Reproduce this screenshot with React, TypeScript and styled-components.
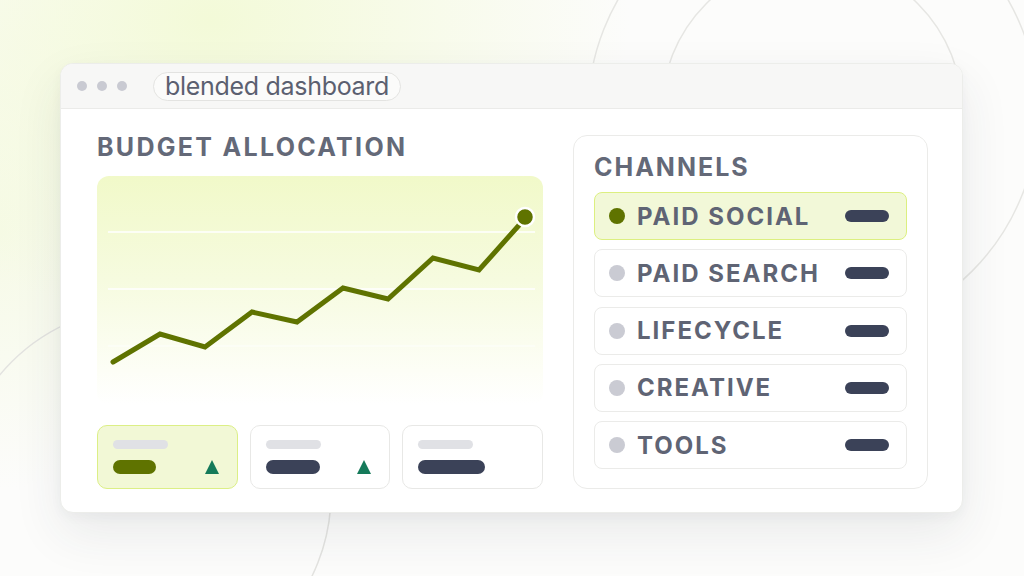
import styled, { createGlobalStyle } from "styled-components";

const GlobalStyle = createGlobalStyle`
  html, body {
    margin: 0;
    padding: 0;
  }
  body {
    font-family: Inter, "Noto Sans", "Liberation Sans", sans-serif;
    background: #fcfcfb;
  }
`;

interface Channel {
  name: string;
  active?: boolean;
}

const channels: Channel[] = [
  { name: "PAID SOCIAL", active: true },
  { name: "PAID SEARCH" },
  { name: "LIFECYCLE" },
  { name: "CREATIVE" },
  { name: "TOOLS" },
];

interface Metric {
  bar: number;
  active?: boolean;
  up?: boolean;
}

const metrics: Metric[] = [
  { bar: 43, active: true, up: true },
  { bar: 54, up: true },
  { bar: 67 },
];

const points = [
  [16, 186],
  [63, 158],
  [108, 171],
  [155, 136],
  [200, 146],
  [246, 112],
  [291, 123],
  [336, 82],
  [382, 94],
  [424, 47],
];

const App = () => {
  return (
    <Page>
      <GlobalStyle />
      <Backdrop viewBox="0 0 1024 576">
        <circle cx="812" cy="110" r="150" fill="none" stroke="#e6e6e3" strokeWidth="1.5" />
        <circle cx="813" cy="112" r="225" fill="none" stroke="#e6e6e3" strokeWidth="1.5" />
        <circle cx="144" cy="494" r="187" fill="none" stroke="#e3e3e0" strokeWidth="1.5" />
      </Backdrop>
      <Window>
        <TitleBar>
          <Dots>
            <Dot />
            <Dot />
            <Dot />
          </Dots>
          <AddressPill>blended dashboard</AddressPill>
        </TitleBar>
        <Body>
          <LeftColumn>
            <Heading>BUDGET ALLOCATION</Heading>
            <Chart>
              <svg width="446" height="229" viewBox="0 0 446 229">
                <line x1="11" y1="56" x2="438" y2="56" stroke="#ffffff" strokeWidth="1.5" />
                <line x1="11" y1="113" x2="438" y2="113" stroke="#ffffff" strokeWidth="1.5" />
                <line x1="11" y1="170" x2="438" y2="170" stroke="#ffffff" strokeOpacity="0.5" strokeWidth="1.5" />
                <polyline
                  points={points.map((p) => p.join(",")).join(" ")}
                  fill="none"
                  stroke="#5f7300"
                  strokeWidth="5"
                  strokeLinecap="round"
                  strokeLinejoin="miter"
                />
                <circle cx="428" cy="41" r="9" fill="#5f7300" stroke="#ffffff" strokeWidth="2.5" />
              </svg>
            </Chart>
            <MetricRow>
              {metrics.map((m, i) => (
                <MetricCard key={i} $active={m.active}>
                  <MetricLabel />
                  <MetricLine>
                    <MetricValue $active={m.active} style={{ width: m.bar }} />
                    {m.up && <UpArrow />}
                  </MetricLine>
                </MetricCard>
              ))}
            </MetricRow>
          </LeftColumn>
          <ChannelPanel>
            <PanelTitle>CHANNELS</PanelTitle>
            <ChannelList>
              {channels.map((c) => (
                <ChannelRow key={c.name} $active={c.active}>
                  <ChannelDot $active={c.active} />
                  <ChannelName>{c.name}</ChannelName>
                  <ChannelBar />
                </ChannelRow>
              ))}
            </ChannelList>
          </ChannelPanel>
        </Body>
      </Window>
    </Page>
  );
};

const Page = styled.div`
  position: relative;
  width: 1024px;
  height: 576px;
  overflow: hidden;
  box-sizing: border-box;
  padding: 63px 0 0 60px;
  background: radial-gradient(ellipse 420px 300px at 210px 20px, #f3fad8 0%, rgba(243, 250, 216, 0.55) 45%, rgba(252, 252, 251, 0) 100%),
    radial-gradient(ellipse 200px 260px at 0px 230px, #f6fae6 0%, rgba(252, 252, 251, 0) 100%),
    #fcfcfb;
`;

const Backdrop = styled.svg`
  position: absolute;
  left: 0;
  top: 0;
  width: 1024px;
  height: 576px;
  pointer-events: none;
`;

const Window = styled.div`
  position: relative;
  width: 903px;
  height: 450px;
  box-sizing: border-box;
  display: flex;
  flex-direction: column;
  border: 1px solid #ecedea;
  border-radius: 13px;
  background: #ffffff;
  overflow: hidden;
  box-shadow: 0 20px 50px rgba(40, 50, 70, 0.09), 0 4px 12px rgba(40, 50, 70, 0.04);
`;

const TitleBar = styled.div`
  height: 44px;
  flex-shrink: 0;
  display: flex;
  align-items: center;
  padding-left: 16px;
  background: #f7f7f6;
  border-bottom: 1px solid #ebebe9;
`;

const Dots = styled.div`
  display: flex;
  gap: 10px;
  margin-right: 26px;
`;

const Dot = styled.span`
  width: 10px;
  height: 10px;
  border-radius: 50%;
  background: #c9cad2;
`;

const AddressPill = styled.div`
  height: 29px;
  box-sizing: border-box;
  display: flex;
  align-items: center;
  padding: 0 11px;
  border: 1px solid #e3e3e1;
  border-radius: 15px;
  background: #fbfbfa;
  color: #5b6070;
  font-size: 25px;
  font-weight: 400;
  letter-spacing: -0.3px;
`;

const Body = styled.div`
  flex: 1;
  display: flex;
  gap: 30px;
  padding: 26px 34px 23px 36px;
`;

const LeftColumn = styled.div`
  width: 446px;
  display: flex;
  flex-direction: column;
`;

const Heading = styled.h2`
  margin: -2px 0 15px;
  height: 28px;
  line-height: 28px;
  font-size: 25px;
  font-weight: 700;
  letter-spacing: 2.3px;
  color: #646978;
`;

const Chart = styled.div`
  height: 229px;
  border-radius: 12px;
  overflow: hidden;
  background: linear-gradient(180deg, #f1f9c9 0%, #f6fbdf 45%, #fdfef6 85%, #ffffff 100%);

  svg {
    display: block;
  }
`;

const MetricRow = styled.div`
  margin-top: 20px;
  display: grid;
  grid-template-columns: repeat(3, 1fr);
  gap: 12px;
`;

const MetricCard = styled.div<{ $active?: boolean }>`
  height: 64px;
  box-sizing: border-box;
  display: flex;
  flex-direction: column;
  justify-content: center;
  gap: 11px;
  padding: 0 18px 0 15px;
  border-radius: 10px;
  border: 1.5px solid ${({ $active }) => ($active ? "#dcef86" : "#e8e8e6")};
  background: ${({ $active }) => ($active ? "#f2f8d6" : "#ffffff")};
`;

const MetricLabel = styled.div`
  width: 55px;
  height: 9px;
  border-radius: 5px;
  background: #e0e1e5;
`;

const MetricLine = styled.div`
  display: flex;
  align-items: center;
  justify-content: space-between;
`;

const MetricValue = styled.div<{ $active?: boolean }>`
  height: 14px;
  border-radius: 7px;
  background: ${({ $active }) => ($active ? "#5f7300" : "#3b4258")};
`;

const UpArrow = styled.div`
  width: 0;
  height: 0;
  border-left: 7.5px solid transparent;
  border-right: 7.5px solid transparent;
  border-bottom: 14px solid #157a5a;
`;

const ChannelPanel = styled.div`
  width: 355px;
  box-sizing: border-box;
  padding: 19px 20px 19px 20px;
  border: 1.5px solid #ebebe9;
  border-radius: 14px;
  display: flex;
  flex-direction: column;
`;

const PanelTitle = styled.h3`
  margin: -2px 0 11px;
  height: 28px;
  line-height: 28px;
  font-size: 25px;
  font-weight: 700;
  letter-spacing: 2px;
  color: #646978;
`;

const ChannelList = styled.div`
  display: flex;
  flex-direction: column;
  gap: 9.25px;
`;

const ChannelRow = styled.div<{ $active?: boolean }>`
  height: 48px;
  box-sizing: border-box;
  display: flex;
  align-items: center;
  padding: 0 17px 0 14px;
  border-radius: 8px;
  border: 1.5px solid ${({ $active }) => ($active ? "#dcef80" : "#ebebe9")};
  background: ${({ $active }) => ($active ? "#f2f8d8" : "#ffffff")};
`;

const ChannelDot = styled.span<{ $active?: boolean }>`
  width: 16px;
  height: 16px;
  border-radius: 50%;
  flex-shrink: 0;
  margin-right: 12px;
  background: ${({ $active }) => ($active ? "#5f7300" : "#cacbd3")};
`;

const ChannelName = styled.span`
  flex: 1;
  font-size: 24px;
  font-weight: 700;
  letter-spacing: 2px;
  color: #5f6474;
`;

const ChannelBar = styled.span`
  width: 44px;
  height: 12px;
  border-radius: 6px;
  background: #3b4258;
`;

export default App;
